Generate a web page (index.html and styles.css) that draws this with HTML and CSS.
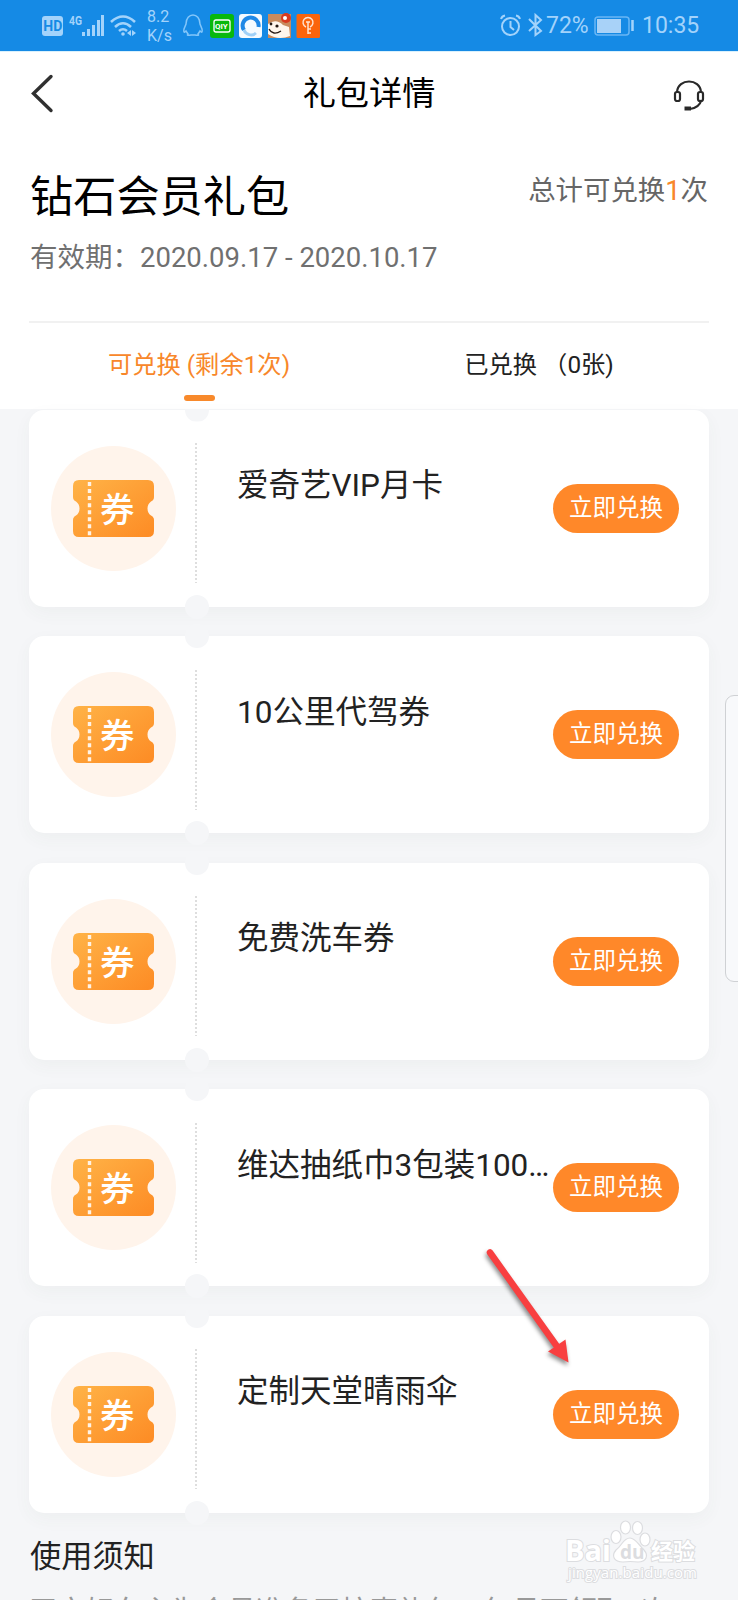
FILE: index.html
```html
<!DOCTYPE html>
<html lang="zh-CN">
<head>
<meta charset="utf-8">
<title>礼包详情</title>
<link rel="stylesheet" href="styles.css">
</head>
<body>
<svg class="defs" width="0" height="0">
  <defs>
    <linearGradient id="gold" x1="0" y1="0" x2="1" y2="1"><stop offset="0" stop-color="#ffb347"/><stop offset="1" stop-color="#fd8b24"/></linearGradient>
    <symbol id="ticket" viewBox="0 0 81 57">
      <path fill="url(#gold)" d="M6 0H75Q81 0 81 6V17Q81 20 78 21.500Q74.500 24 74.500 28.500T78 35.500Q81 37 81 40V51Q81 57 75 57H6Q0 57 0 51V40Q0 37 3 35.500Q6.500 33 6.500 28.500T3 21.500Q0 20 0 17V6Q0 0 6 0Z"/>
      <path d="M16.500 2V57" stroke="#fff3e6" stroke-width="3.400" stroke-dasharray="4 3.050"/>
    </symbol>
  </defs>
</svg>
<div class="phone">
  <div class="status">
    <svg class="status-left" width="128" height="51" viewBox="0 0 128 51" fill="none" stroke="#a3d3fb">
      <rect x="20" y="16" width="21" height="20" rx="3" fill="#a3d3fb" stroke="none"/>
      <text x="21.300" y="31" class="hd">HD</text>
      <text x="47" y="24.500" class="g4" textLength="13" lengthAdjust="spacingAndGlyphs">4G</text>
      <path stroke-width="3" d="M61.500 32V36M66.500 29V36M71.500 25V36M76.500 20V36M80.500 15V36" transform="translate(22 0)"/>
      <path stroke-width="2.600" d="M89 22Q101 11 113 22M93 27Q101 19.500 109 27M97 31Q101 27.500 105 31"/>
      <circle cx="101" cy="34" r="1.800" fill="#a3d3fb" stroke="none"/>
      <path fill="#a3d3fb" stroke="none" d="M105 33l4-3v6zM114 33l-4-3v6z"/>
    </svg>
    <div class="speed"><span>8.2</span><span>K/s</span></div>
    <svg class="apps" width="140" height="51" viewBox="0 0 140 51" fill="none">
      <path stroke="#83c6fa" stroke-width="1.500" d="M5 24C5 12 19 12 19 24L21 29Q22 34 19 31L17 34Q19 36 14 35H10Q5 36 7 34L5 31Q2 34 3 29Z" transform="translate(1 0)"/>
      <rect x="30" y="14" width="24" height="24" rx="3" fill="#08b80c"/>
      <rect x="34" y="20" width="16" height="12" rx="2" stroke="#fff" stroke-width="1.300"/>
      <text x="35" y="29" class="qiy">QIY</text>
      <rect x="59" y="14" width="23" height="24" rx="3" fill="#f5fbff"/>
      <path stroke="#2089e6" stroke-width="4" d="M64 30A8 8 0 1 1 78.500 27"/>
      <path stroke="#9fd0f7" stroke-width="3" d="M64 30A7.500 7.500 0 0 0 76 33"/>
      <rect x="88" y="14" width="23" height="24" fill="#c98b5d"/>
      <path fill="#fff6ec" d="M88 24Q96 18 103 25L109 27 110 36Q98 41 88 34Z"/>
      <circle cx="106" cy="18" r="5" fill="#d83b20"/><circle cx="105" cy="18" r="2" fill="#fff"/>
      <path stroke="#251812" stroke-width="1.300" d="M89 29Q93 36 101 31"/><circle cx="91" cy="24" r="1.400" fill="#251812"/><circle cx="97" cy="26" r="1.600" fill="#251812"/>
      <rect x="116.500" y="14" width="23.500" height="24" rx="1.500" fill="#fb640b"/>
      <path stroke="#ffe4d1" stroke-width="1.500" d="M126 27A5 5 0 1 1 130 27M128 22V34M128 29H131M128 33H131M126 22H130"/>
    </svg>
    <svg class="status-right" width="46" height="51" viewBox="0 0 46 51" fill="none" stroke="#a3d3fb" stroke-width="2">
      <circle cx="12.500" cy="26.500" r="8.500"/><path d="M12.500 21V27L16 30M3 19Q4 16 7 15.500M18 15.500Q21 16 22 19"/>
      <path stroke-width="2" d="M31 19L43 31 37.500 35V15L43 20 31 31"/>
    </svg>
    <span class="pct">72%</span>
    <svg class="battery" width="42" height="51" viewBox="0 0 42 51"><rect x="1" y="17" width="34" height="18" rx="3" fill="none" stroke="#69b6f5" stroke-width="1.500"/><rect x="3" y="19" width="24" height="14" fill="#a8d2f8"/><path d="M38.500 20V31" stroke="#a3d3fb" stroke-width="2.500"/></svg>
    <span class="time">10:35</span>
  </div>

  <header class="nav">
    <svg width="24" height="40" viewBox="0 0 24 40"><path d="M20 2.500L2.500 19.500 20 36.500" fill="none" stroke="#303030" stroke-width="3.400" stroke-linecap="round"/></svg>
    <h1>礼包详情</h1>
    <svg class="headset" width="32" height="32" viewBox="0 0 32 32" fill="none" stroke="#292929" stroke-width="2.200">
      <path d="M4 12C5 -2 27 -2 28 12M28.500 20Q26 28 17 29"/><rect x="2" y="12" width="5" height="9" rx="2"/><rect x="25" y="12" width="5" height="9" rx="2"/><path stroke-width="4" d="M11.500 28.500H18"/>
    </svg>
  </header>

  <section class="info">
    <div class="info-row"><h2>钻石会员礼包</h2><span class="total">总计可兑换<b>1</b>次</span></div>
    <p class="valid">有效期：2020.09.17 - 2020.10.17</p>
  </section>
  <nav class="tabs">
    <span class="tab active">可兑换 (剩余1次)</span>
    <span class="tab">已兑换 （0张)</span>
  </nav>

  <main class="list">
    <article class="card"><div class="badge"><svg width="81" height="57"><use href="#ticket"/></svg><i>券</i></div><div class="dots"></div><h3>爱奇艺VIP月卡</h3><button>立即兑换</button></article>
    <article class="card"><div class="badge"><svg width="81" height="57"><use href="#ticket"/></svg><i>券</i></div><div class="dots"></div><h3>10公里代驾券</h3><button>立即兑换</button></article>
    <article class="card"><div class="badge"><svg width="81" height="57"><use href="#ticket"/></svg><i>券</i></div><div class="dots"></div><h3>免费洗车券</h3><button>立即兑换</button></article>
    <article class="card"><div class="badge"><svg width="81" height="57"><use href="#ticket"/></svg><i>券</i></div><div class="dots"></div><h3>维达抽纸巾3包装100…</h3><button>立即兑换</button></article>
    <article class="card"><div class="badge"><svg width="81" height="57"><use href="#ticket"/></svg><i>券</i></div><div class="dots"></div><h3>定制天堂晴雨伞</h3><button>立即兑换</button></article>
  </main>
  <section class="notice">
    <h4>使用须知</h4>
    <p>平安好车主为会员准备了惊喜礼包，每月可领取1次</p>
  </section>

  <div class="side-handle"></div>
  <svg class="arrow" width="100" height="130" viewBox="0 0 100 130">
    <path d="M10 12.500L76 105" stroke="#f83f40" stroke-width="6.500" stroke-linecap="round"/><path fill="#f83f40" d="M68 111.500L85.500 99.500 88.500 122.500Z"/>
  </svg>
  <svg class="watermark" width="140" height="70" viewBox="0 0 140 70">
    <g fill="#fff" stroke="#dcdde0" stroke-width="1.200">
      <text x="2" y="42" class="wm-bai" textLength="46" lengthAdjust="spacingAndGlyphs">Bai</text>
      <ellipse cx="53" cy="18" rx="5" ry="6.500"/><ellipse cx="62.500" cy="8.500" rx="5" ry="6.500"/><ellipse cx="74.500" cy="9" rx="5" ry="6.500"/><ellipse cx="82" cy="20.500" rx="5" ry="6.500"/>
      <path d="M67 19C73 19 76 27 81 31C86 37 83 43 75 43Q67 42 60 43C51 43 48 37 53 31C59 27 60 19 67 19Z"/>
      <text x="57" y="40" class="wm-du">du</text>
      <text x="88" y="40" class="wm-cn">经验</text>
      <text x="5" y="59" class="wm-url" textLength="129">jingyan.baidu.com</text>
    </g>
  </svg>
</div>
</body>
</html>
```
FILE: styles.css
```css
* { box-sizing: border-box; }
body { margin: 0; font-family: Roboto, "Noto Sans CJK SC", sans-serif; background: #f5f6f8; }
h1, h2, h3, h4, p { margin: 0; font-weight: 400; white-space: nowrap; }
.defs { position: absolute; }
.phone { position: relative; width: 738px; height: 1600px; overflow: hidden; background: #f5f6f8; }

.status { display: flex; height: 51px; padding-left: 22px; background: #158ae5; color: #a3d3fb; line-height: 52px; }
.status svg { flex: none; }
.status-left { margin-right: -4px; }
.status-left path[transform] { transform: none; }
.hd { font: bold 14px Roboto, sans-serif; fill: #158ae5; stroke: none; }
.g4 { font: bold 13px Roboto, sans-serif; fill: #a3d3fb; stroke: none; }
.speed { display: flex; flex-direction: column; width: 34px; padding-top: 8px; font-size: 16px; line-height: 18.500px; }
.speed span { padding-left: 1px; }
.qiy { font: bold 8px Roboto, sans-serif; fill: #fff; }
.status-right { margin-left: 178px; }
.pct { width: 48px; margin-left: 2px; font-size: 23px; }
.time { margin-left: 6px; font-size: 23px; }

.nav { display: grid; grid-template-columns: 24px 1fr 32px; align-items: center; height: 84px; padding: 0 33px 0 31px; background: #fff; border-top: 1px solid #d9f1fd; }
.nav h1 { font-size: 33.200px; line-height: 44px; text-align: center; color: #000; padding: 1px 0 0 10px; }
.headset { margin-top: 4px; }

.info { height: 186px; padding: 34px 30px 0; background: #fff; }
.info-row { display: flex; justify-content: space-between; height: 62px; }
.info h2 { font-size: 43.200px; line-height: 58px; color: #000; }
.total { font-size: 27.400px; line-height: 44px; color: #666; }
.total b { color: #f8872a; font-weight: 400; }
.valid { font-size: 27.500px; line-height: 54px; color: #707070; }

.tabs { display: grid; grid-template-columns: 1fr 1fr; height: 88px; padding: 0 29px; background: #fff; }
.tab { position: relative; border-top: 2px solid #f1f1f1; font-size: 24.300px; line-height: 83px; text-align: center; color: #222; white-space: nowrap; }
.active { color: #f8872a; }
.active::after { content: ""; position: absolute; left: 155px; bottom: 8px; width: 31px; height: 6px; border-radius: 3px; background: #f8892b; }

.list { display: grid; gap: 29.500px; padding: .5px 29px 0; }
.card { position: relative; display: grid; grid-template-columns: 126px 2px 312px 126px; align-items: center; height: 197px; padding-left: 22px; border-radius: 15px; background: #fff; box-shadow: 0 6px 18px rgba(70, 90, 80, .045); }
.card::before, .card::after { content: ""; position: absolute; left: 156px; width: 24px; height: 24px; border-radius: 50%; background: #f5f6f8; }
.card::before { top: -12px; }
.card::after { bottom: -12px; }
.card:first-child::before { clip-path: inset(12px 0 0); }
.badge { position: relative; display: grid; place-items: center; width: 125px; height: 125px; border-radius: 50%; background: #fff4eb; }
.badge svg { display: block; }
.badge i { position: absolute; left: 49px; top: 42px; font-style: normal; font-weight: 500; font-size: 34.500px; line-height: 44px; color: #fff; }
.dots { width: 2px; height: 140px; margin: 10px 0 0 18px; background: repeating-linear-gradient(#dedede 0 2px, transparent 2px 4.100px); }
.card h3 { align-self: start; padding-top: 54.500px; margin-left: 58px; font-size: 31.500px; line-height: 44px; color: #222; }
.card button { width: 126px; height: 49px; margin-left: 62px; padding: 0 0 1px; border: 0; border-radius: 25px; background: #ff8829; color: #fff; font: 400 23.500px/46px Roboto, "Noto Sans CJK SC", sans-serif; }

.notice { padding: 21.500px 30px 0; }
.notice h4 { font-size: 31.200px; line-height: 46px; color: #222; }
.notice p { margin: 14px 0 0 -1px; font-size: 28.400px; line-height: 36px; color: #999; }

.side-handle { position: absolute; left: 725px; top: 695px; width: 24px; height: 287px; border: 1px solid #cfd1d4; border-radius: 9px; background: #f8f9fb; }
.arrow { position: absolute; left: 480px; top: 1240px; filter: drop-shadow(-1px 3px 2px rgba(0, 0, 0, .45)); }
.watermark { position: absolute; left: 563px; top: 1519px; }
.wm-bai, .wm-du, .wm-cn, .wm-url { paint-order: stroke; stroke-width: 2px; }
.wm-bai { font: bold 29px "Open Sans", sans-serif; }
.wm-du { font: bold 19px "Open Sans", sans-serif; fill: #dcdde0; stroke: none; }
.wm-cn { font: bold 22px "Noto Sans CJK SC", sans-serif; }
.wm-url { font: 15px "Open Sans", sans-serif; }
```
